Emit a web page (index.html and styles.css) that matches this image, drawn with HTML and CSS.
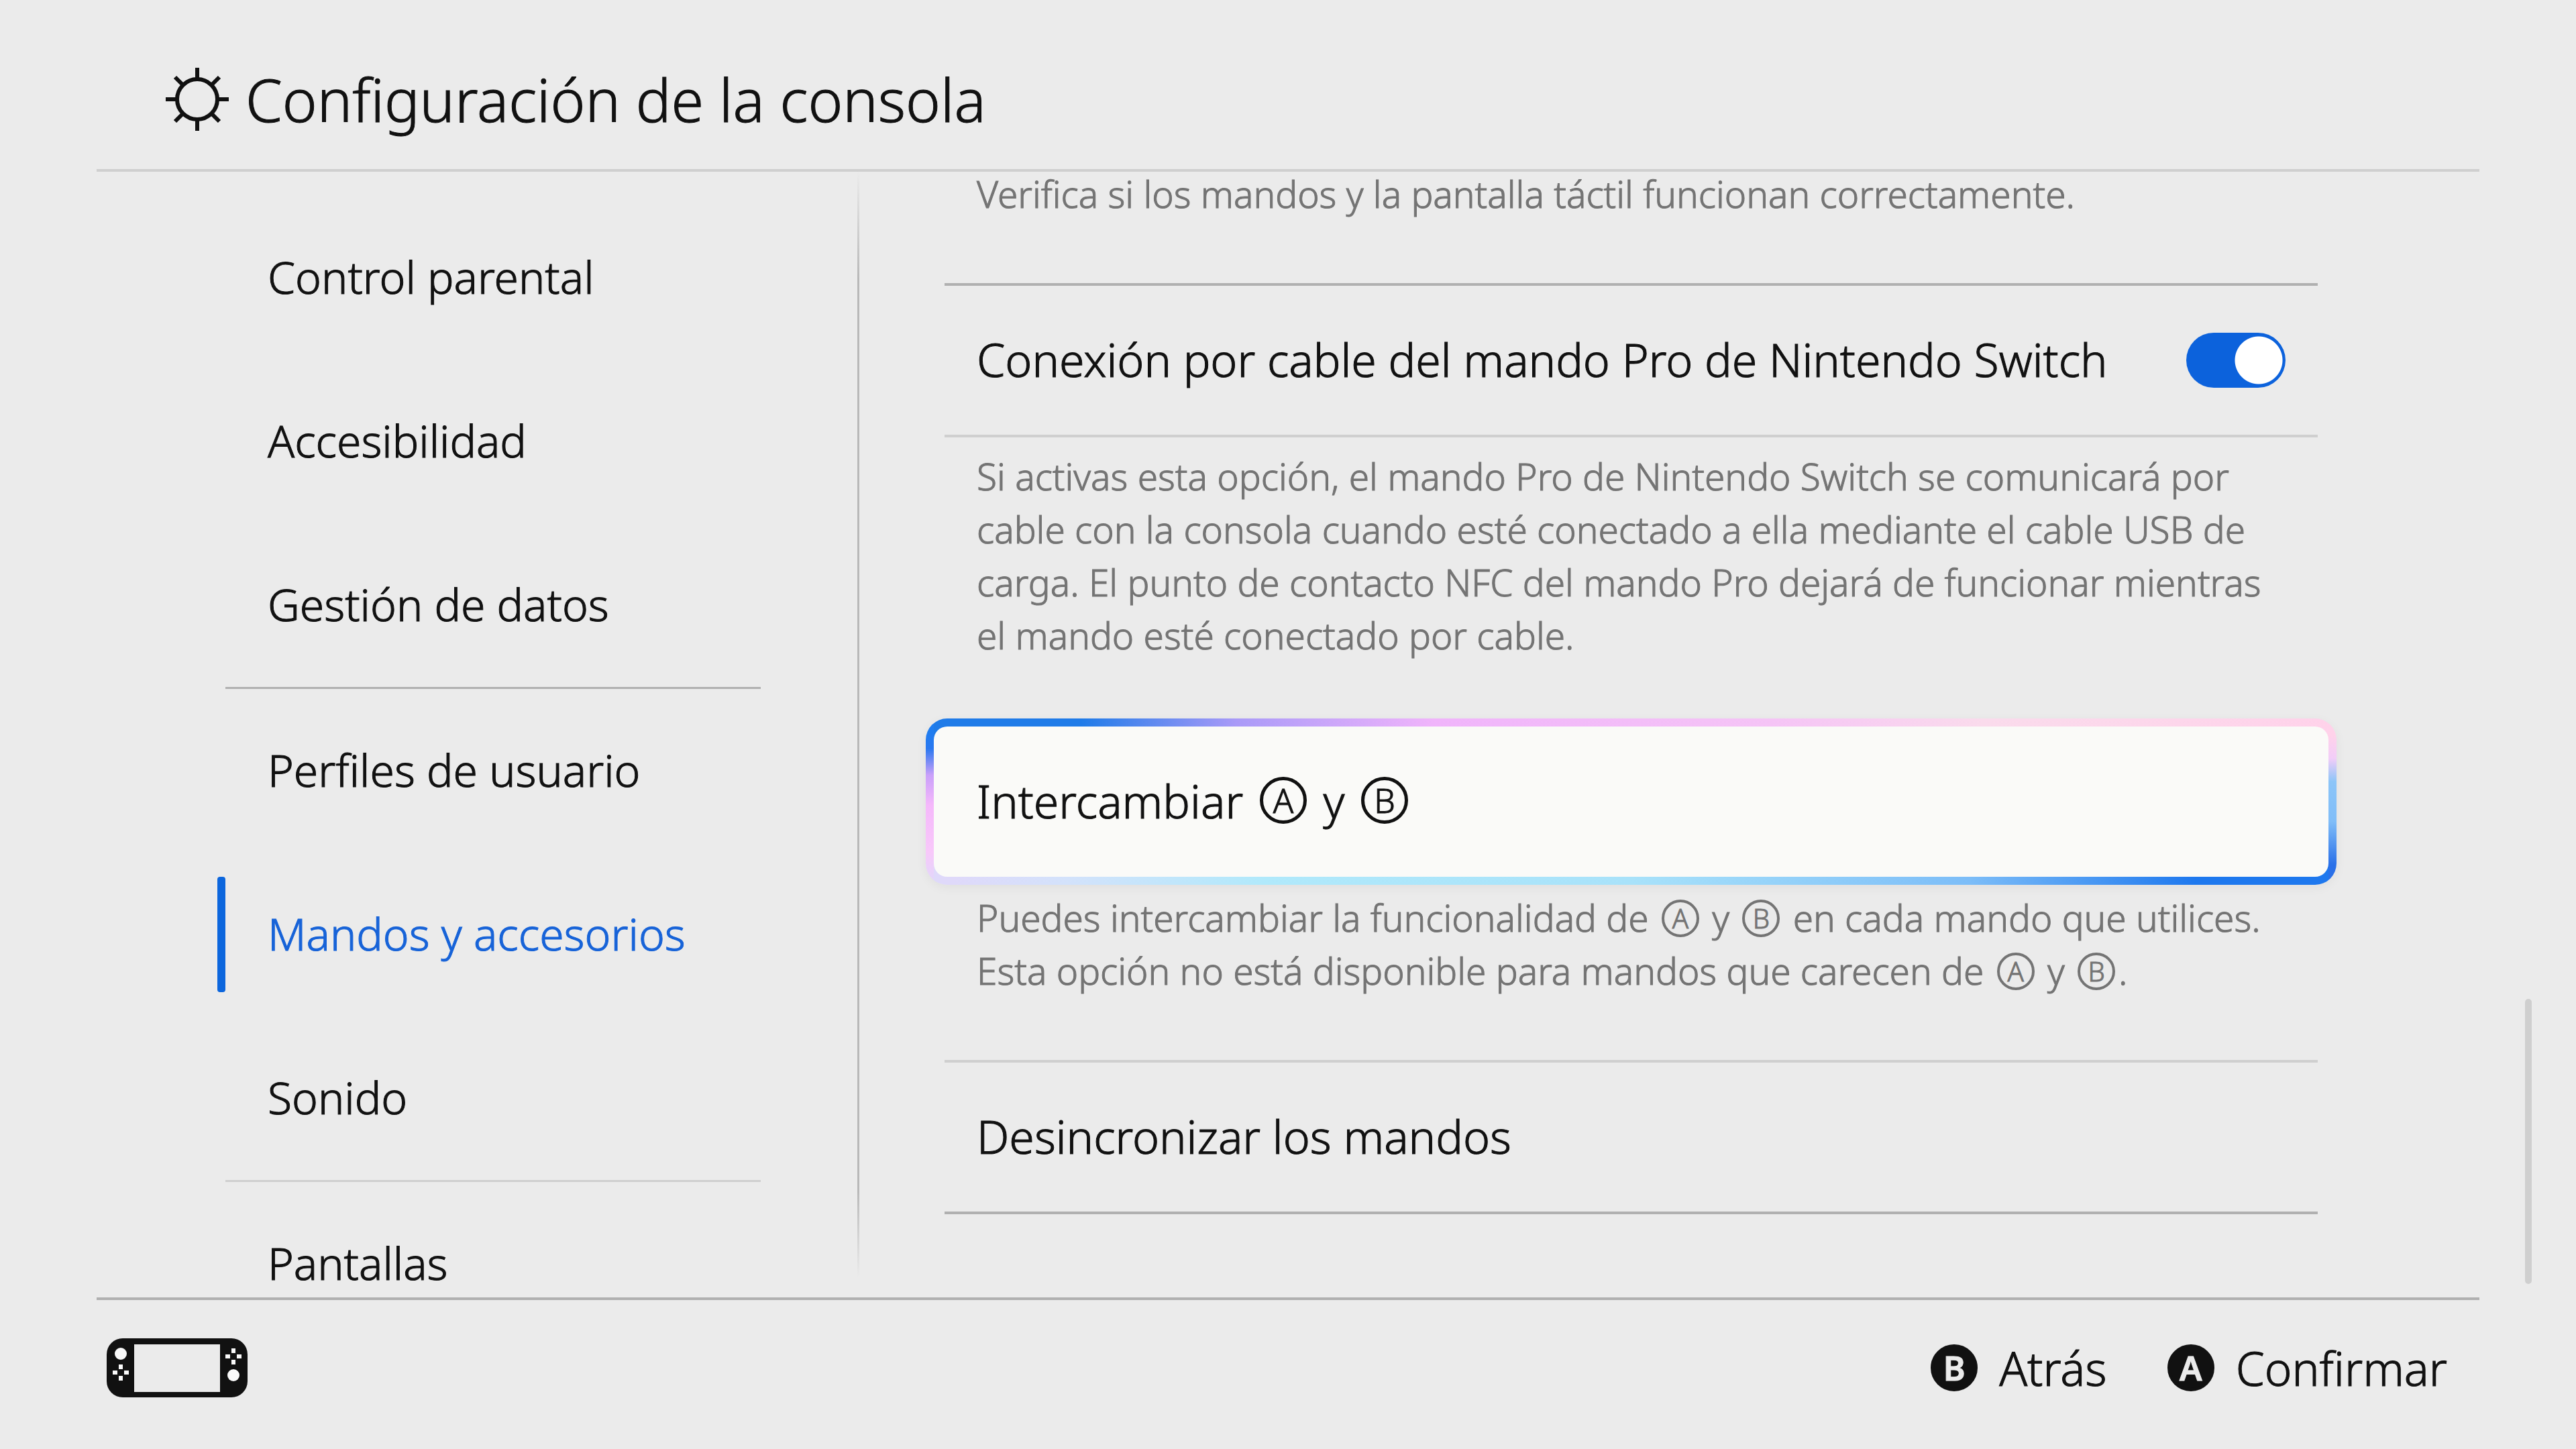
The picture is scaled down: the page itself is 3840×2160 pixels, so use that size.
FILE: index.html
```html
<!DOCTYPE html>
<html lang="es">
<head>
    <meta charset="UTF-8" />
    <meta name="viewport" content="width=device-width, initial-scale=1.0" />
    <title>Configuración de la consola</title>
    <link rel="stylesheet" href="styles.css">
</head>
<body>
    <header class="header">
        <svg class="icon-sun" viewBox="0 0 96 96" aria-hidden="true">
            <circle cx="48" cy="48" r="30" />
            <path d="M48 1v16M48 79v16M1 48h16M79 48h16M15 15l11 11M70 70l11 11M81 15L70 26M26 70L15 81" />
        </svg>
        <h1>Configuración de la consola</h1>
    </header>

    <main class="main">
        <nav class="sidebar">
            <ul>
                <li><a href="#">Control parental</a></li>
                <li><a href="#">Accesibilidad</a></li>
                <li><a href="#">Gestión de datos</a></li>
                <li class="sep-dark"><a href="#">Perfiles de usuario</a></li>
                <li><a href="#" class="active" aria-current="page">Mandos y accesorios</a></li>
                <li><a href="#">Sonido</a></li>
                <li class="sep"><a href="#">Pantallas</a></li>
            </ul>
        </nav>

        <div class="content">
            <p class="desc">Verifica si los mandos y la pantalla táctil funcionan correctamente.</p>

            <div class="item line-top-dark">
                <label for="cable">Conexión por cable del mando Pro de Nintendo Switch</label>
                <input type="checkbox" id="cable" class="toggle" checked />
            </div>
            <p class="desc">Si activas esta opción, el mando Pro de Nintendo Switch se comunicará por<br>
                cable con la consola cuando esté conectado a ella mediante el cable USB de<br>
                carga. El punto de contacto NFC del mando Pro dejará de funcionar mientras<br>
                el mando esté conectado por cable.</p>

            <button type="button" class="item focused">
                <span>Intercambiar <span class="key">A</span> y <span class="key">B</span></span>
            </button>
            <p class="desc">Puedes intercambiar la funcionalidad de <span class="key key-small">A</span> y <span class="key key-small">B</span> en cada mando que utilices.<br>
                Esta opción no está disponible para mandos que carecen de <span class="key key-small">A</span> y <span class="key key-small">B</span>.</p>

            <button type="button" class="item line-bottom-dark">Desincronizar los mandos</button>
        </div>

        <div class="scrollbar"></div>
    </main>

    <footer class="footer">
        <svg class="icon-console" viewBox="0 0 210 88" aria-hidden="true">
            <path class="body" fill-rule="evenodd" d="M24 0H186A24 24 0 0 1 210 24V64A24 24 0 0 1 186 88H24A24 24 0 0 1 0 64V24A24 24 0 0 1 24 0ZM41 9V80H169V9Z" />
            <circle cx="21" cy="23" r="9" />
            <path d="M18 39h6v7h-6zM18 56h6v7h-6zM9 48h7v6h-7zM26 48h7v6h-7z" />
            <circle cx="189" cy="55" r="9" />
            <path d="M186 15h6v7h-6zM186 32h6v7h-6zM177 24h7v6h-7zM194 24h7v6h-7z" />
        </svg>
        <div class="actions">
            <button type="button"><span class="key key-solid">B</span>Atrás</button>
            <button type="button"><span class="key key-solid">A</span>Confirmar</button>
        </div>
    </footer>
</body>
</html>
```
FILE: styles.css
```css
* {
    box-sizing: border-box;
}

body {
    display: flex;
    flex-direction: column;
    height: 100vh;
    margin: 0;
    font-family: "Noto Sans", sans-serif;
    font-weight: 300;
    -webkit-text-stroke: 1px;
    background-color: #ebebeb;
    color: #111;
    overflow: hidden;
}

button {
    padding: 0;
    border: none;
    background: none;
    font: inherit;
    color: inherit;
    text-align: left;
    cursor: pointer;
}

.header {
    display: flex;
    align-items: center;
    gap: 24px;
    margin: 0 144px;
    padding: 90px 0 46px 102px;
    border-bottom: 4px solid #cfcfcf;
}

.header h1 {
    margin: 0;
    font-size: 88px;
    font-weight: 300;
    line-height: 116px;
}

.icon-sun {
    width: 96px;
    height: 96px;
    fill: none;
    stroke: #111;
    stroke-width: 6;
}

.main {
    position: relative;
    display: grid;
    grid-template-columns: 1134px 1fr;
    flex: 1;
    min-height: 0;
    padding: 0 144px;
}

/* Menu lateral */
.sidebar {
    min-height: 0;
    padding: 36px 144px 0 192px;
}

.sidebar ul {
    margin: 0;
    padding: 0;
    list-style: none;
}

.sidebar a {
    position: relative;
    display: block;
    padding: 0 0 4px 63px;
    font-size: 66px;
    line-height: 240px;
    color: inherit;
    text-decoration: none;
}

.sidebar .sep {
    border-top: 3px solid #cfcfcf;
}

.sidebar .sep-dark {
    border-top: 3px solid #b0b0b0;
}

.sidebar .active {
    color: #1763d8;
}

.sidebar .active::before {
    content: "";
    position: absolute;
    left: -12px;
    top: 36px;
    width: 12px;
    height: 172px;
    border-radius: 4px;
    background-color: #0c66dd;
}

/* Opciones, alineadas al final de la lista */
.content {
    display: flex;
    flex-direction: column;
    justify-content: flex-end;
    min-height: 0;
    padding: 0 241px 124px 130px;
    background: linear-gradient(transparent, #b8b8b8 160px, #b8b8b8 calc(100% - 160px), transparent calc(100% - 30px)) no-repeat left top / 3px 100%;
}

.item {
    position: relative;
    display: flex;
    flex: none;
    align-items: center;
    justify-content: space-between;
    height: 230px;
    padding: 0 48px 4px;
    border-top: 4px solid #cfcfcf;
    border-bottom: 4px solid #cfcfcf;
    font-size: 68px;
}

.line-top-dark {
    border-top-color: #b0b0b0;
}

.line-bottom-dark {
    border-bottom-color: #b0b0b0;
}

.desc {
    margin: 0;
    padding: 18px 48px 94px;
    font-size: 55px;
    line-height: 79px;
    color: #747474;
    white-space: nowrap;
}

.toggle {
    appearance: none;
    width: 148px;
    height: 82px;
    margin: 4px 0 0;
    border-radius: 41px;
    background: radial-gradient(circle at 108px 41px, #fff 35px, #0c62dc 36px);
}

.focused {
    z-index: 0;
    border-color: transparent;
}

.focused::before,
.focused::after {
    content: "";
    position: absolute;
    z-index: -1;
}

.focused::before {
    inset: -13px -28px;
    border-radius: 32px;
    background:
        linear-gradient(#1f7df0 8%, #2a78f0 18%, #c9a0fa 34%, #f5b8fb 52%, #f8c8fa 80%, #dfd9fa) no-repeat left / 12px 100%,
        linear-gradient(#ffd2ea 10%, #f2cdf8 24%, #8cc5f8 38%, #80bdf8 62%, #2a70e8 88%) no-repeat right / 12px 100%,
        linear-gradient(90deg, #1f7be8 11%, #a99af8 22%, #f0b4fb 36%, #f5c4f6 60%, #fadbec 75%, #ffd2ea) no-repeat top / 100% 40px,
        linear-gradient(90deg, #dfd9fa 2%, #d3e2fb 10%, #b0e9fb 24%, #a8e2fa 50%, #7cbdf8 74%, #1e78ee 90%) no-repeat bottom / 100% 40px;
    box-shadow: 0 4px 16px rgba(0, 0, 0, 0.05);
}

.focused::after {
    inset: -1px -16px;
    border-radius: 20px;
    background-color: #fafaf8;
}

/* Botones del mando */
.key {
    display: inline-flex;
    align-items: center;
    justify-content: center;
    width: 70px;
    height: 70px;
    margin: 0 7px;
    border: 5px solid;
    border-radius: 50%;
    font-size: 50px;
    line-height: 50px;
    vertical-align: 8px;
}

.key-small {
    width: 56px;
    height: 56px;
    margin: 0 5px;
    border-width: 4px;
    font-size: 40px;
    line-height: 40px;
    vertical-align: 5px;
}

.key-solid {
    margin: 0;
    border-color: #111;
    background-color: #111;
    color: #ebebeb;
    font-weight: 600;
}

.scrollbar {
    position: absolute;
    right: 66px;
    bottom: 20px;
    width: 10px;
    height: 425px;
    border-radius: 5px;
    background-color: #cfcfcf;
}

.footer {
    display: flex;
    align-items: center;
    justify-content: space-between;
    margin: 0 144px;
    padding: 47px 48px 67px 15px;
    border-top: 4px solid #b0b0b0;
}

.icon-console {
    width: 210px;
    height: 88px;
    fill: #fafafa;
}

.icon-console .body {
    fill: #111;
}

.actions {
    display: flex;
    gap: 90px;
}

.actions button {
    display: flex;
    align-items: center;
    gap: 32px;
    font-size: 69px;
    line-height: 108px;
}
```
